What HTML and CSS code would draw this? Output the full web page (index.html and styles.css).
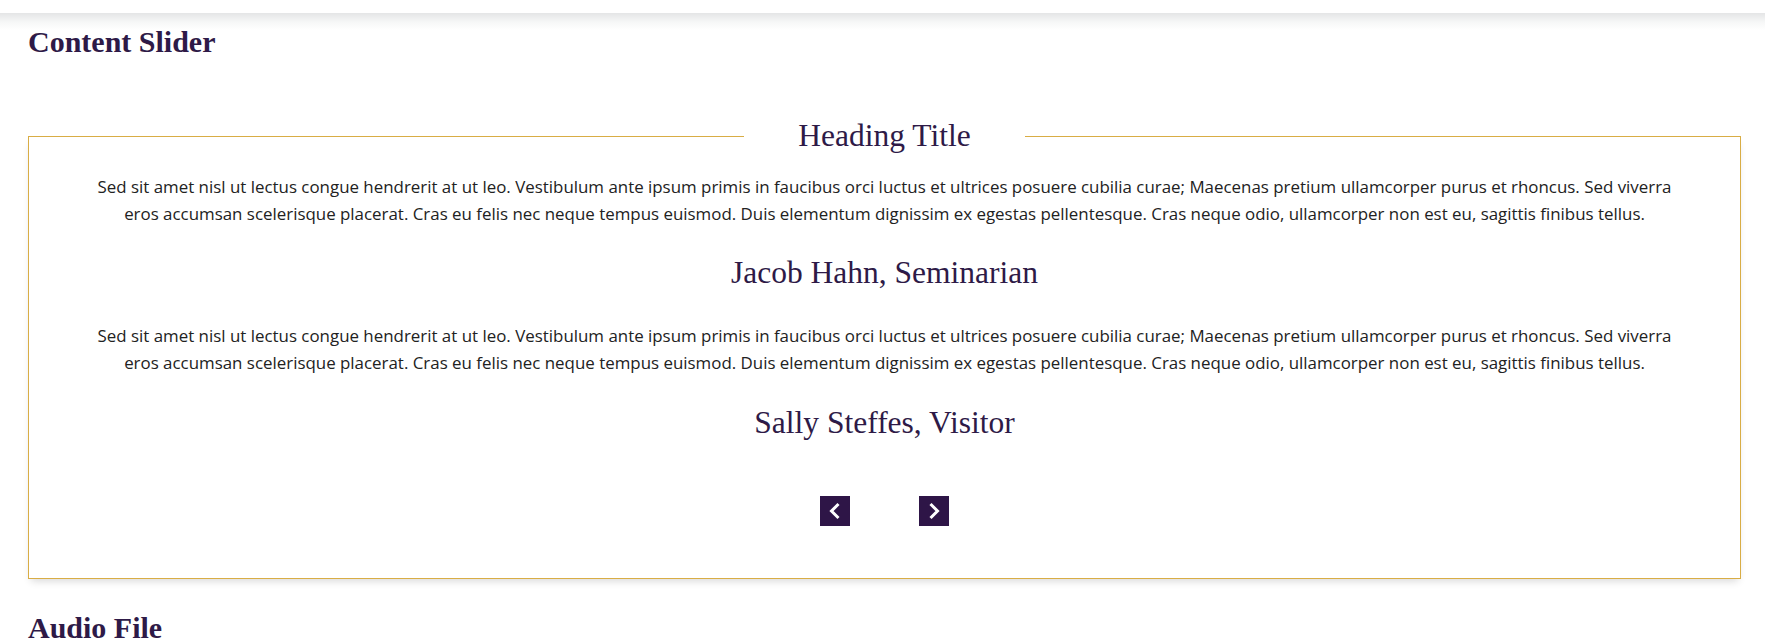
FILE: index.html
```html
<!DOCTYPE html>
<html lang="en">
<head>
<meta charset="utf-8">
<title>Content Slider</title>
<link rel="stylesheet" href="styles.css">
</head>
<body>
<div class="page">
  <h2 class="section-title">Content Slider</h2>
  <fieldset class="slider">
    <legend class="slider-title">Heading Title</legend>
    <div class="slide">
      <p class="quote">Sed sit amet nisl ut lectus congue hendrerit at ut leo. Vestibulum ante ipsum primis in faucibus orci luctus et ultrices posuere cubilia curae; Maecenas pretium ullamcorper purus et rhoncus. Sed viverra eros accumsan scelerisque placerat. Cras eu felis nec neque tempus euismod. Duis elementum dignissim ex egestas pellentesque. Cras neque odio, ullamcorper non est eu, sagittis finibus tellus.</p>
      <h3 class="author">Jacob Hahn, Seminarian</h3>
    </div>
    <div class="slide">
      <p class="quote quote-second">Sed sit amet nisl ut lectus congue hendrerit at ut leo. Vestibulum ante ipsum primis in faucibus orci luctus et ultrices posuere cubilia curae; Maecenas pretium ullamcorper purus et rhoncus. Sed viverra eros accumsan scelerisque placerat. Cras eu felis nec neque tempus euismod. Duis elementum dignissim ex egestas pellentesque. Cras neque odio, ullamcorper non est eu, sagittis finibus tellus.</p>
      <h3 class="author author-second">Sally Steffes, Visitor</h3>
    </div>
    <div class="controls">
      <button class="nav-btn" aria-label="Previous">
        <svg width="30" height="30" viewBox="0 0 30 30"><path d="M18.5 8 L11.5 15 L18.5 22" fill="none" stroke="#fff" stroke-width="3"/></svg>
      </button>
      <button class="nav-btn" aria-label="Next">
        <svg width="30" height="30" viewBox="0 0 30 30"><path d="M11.5 8 L18.5 15 L11.5 22" fill="none" stroke="#fff" stroke-width="3"/></svg>
      </button>
    </div>
  </fieldset>
  <h2 class="section-title section-title-next">Audio File</h2>
</div>
</body>
</html>
```

FILE: styles.css
```css
html, body {
  margin: 0;
  padding: 0;
  background: #fff;
}

.page {
  background: linear-gradient(to bottom, #fff 0, #fff 13px, #e4e5e6 13px, #f6f7f7 22px, #fff 30px) no-repeat;
  padding-top: 25px;
  height: 618px;
  overflow: hidden;
}

.section-title {
  margin: 0;
  padding-left: 28px;
  font-family: "Liberation Serif", "Times New Roman", serif;
  font-weight: bold;
  font-size: 30px;
  line-height: 34px;
  color: #2e1a47;
}

.section-title-next {
  margin-top: 32px;
}

.slider {
  margin: 59px 24px 0 28px;
  padding: 0 58px 52px;
  min-width: 0;
  border: 1px solid #d9ad45;
  box-shadow: 0 5px 8px -3px rgba(0, 0, 0, 0.16);
  text-align: center;
  background: #fff;
}

.slider-title {
  margin: 0 auto;
  padding: 0 54px;
  font-family: "Liberation Serif", "Times New Roman", serif;
  font-weight: normal;
  font-size: 31.5px;
  line-height: 36px;
  color: #2e1a47;
}

.quote {
  margin: 19px 0 0;
  font-family: "Open Sans", sans-serif;
  font-size: 16.9px;
  line-height: 27px;
  color: #222;
}

.quote-second {
  margin-top: 31px;
}

.author {
  margin: 28px 0 0;
  font-family: "Liberation Serif", "Times New Roman", serif;
  font-weight: normal;
  font-size: 31.5px;
  line-height: 36px;
  color: #2e1a47;
}

.author-second {
  margin-top: 29px;
}

.controls {
  display: flex;
  justify-content: center;
  gap: 69px;
  margin-top: 55px;
}

.nav-btn {
  width: 30px;
  height: 30px;
  padding: 0;
  border: 0;
  background: #2e1547;
  display: flex;
  align-items: center;
  justify-content: center;
}

.nav-btn svg {
  display: block;
}
```
